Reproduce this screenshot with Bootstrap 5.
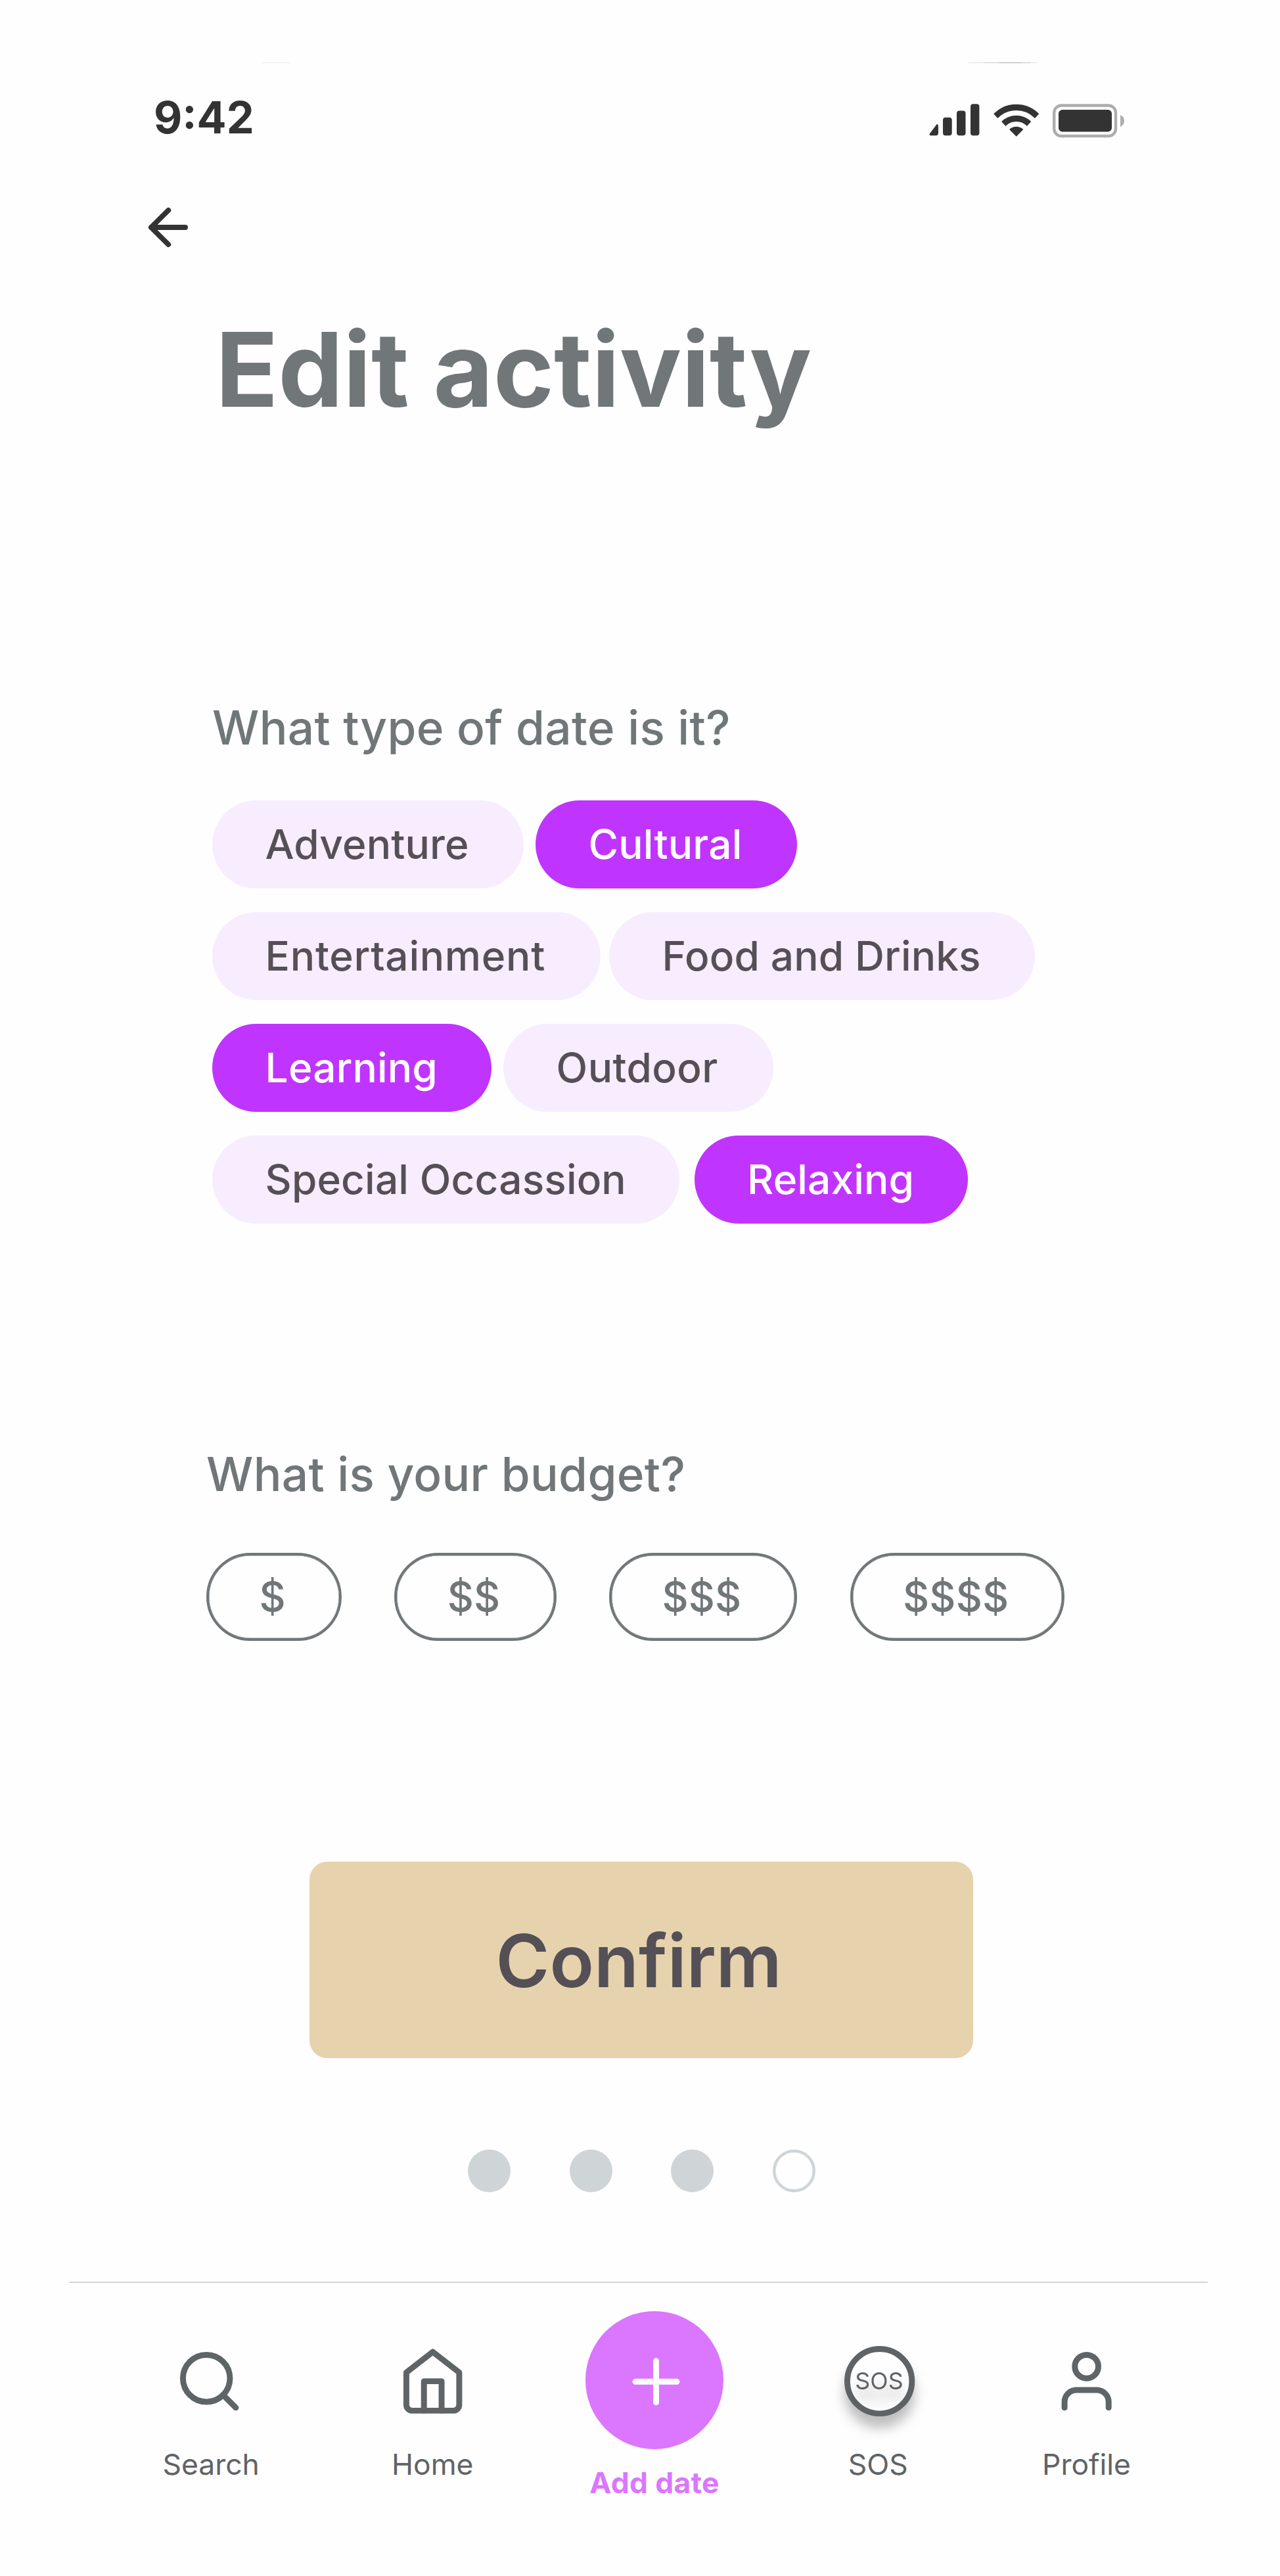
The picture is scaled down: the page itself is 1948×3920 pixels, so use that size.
<!DOCTYPE html>
<html lang="en">
<head>
<meta charset="utf-8">
<meta name="viewport" content="width=device-width, initial-scale=1">
<title>Edit activity</title>
<link href="https://cdn.jsdelivr.net/npm/bootstrap@5.3.0/dist/css/bootstrap.min.css" rel="stylesheet">
<style>
  body { font-family: Inter, "Liberation Sans", sans-serif; background: #fefefe; color: #717678; }
  .phone { width: 1948px; height: 3920px; overflow: hidden; }
  .phone svg { display: block; overflow: visible; flex: none; }
  .edge-lines { height: 1px; padding-left: 399px; margin-top: 95px; }
  .edge-a { width: 42px; background: #e8e8e8; }
  .edge-b { width: 104px; margin-left: 1033px; background: linear-gradient(90deg, #e2e2e2 0 23px, #c9c9c9 23px 47px, #ababab 47px 80px, #c6c6c6 80px 95px, #e2e2e2 95px); }
  .status { height: 114px; padding: 38px 237px 0 234px; color: #333; }
  .clock { font-size: 66.7px; line-height: 90px; font-weight: 700; }
  .status-icons { margin-top: 24px; }
  .back { margin: 102px 0 0 222px; width: 68px; height: 68px; }
  h1 { font-size: 157px; line-height: 190px; font-weight: 700; margin: 87px 0 0 328px; }
  h2 { font-size: 71.1px; line-height: 86px; font-weight: 500; margin: 0; white-space: nowrap; letter-spacing: .33px; }
  .q-type { padding: 407.4px 0 0 323px; }
  .q-budget { padding: 338px 0 0 314px; }
  .tags { margin-top: 67.9px; gap: 36.2px; }
  .chip { height: 133.8px; padding: 0 0 0 80.6px; border: 0; font-size: 62.2px; line-height: 1; font-weight: 500; letter-spacing: .12px; color: #545056; background: #f8edff; white-space: nowrap; }
  .chip.active, .chip.active:hover { background: #c034ff; color: #fff; }
  .gap-18 { gap: 18px; } .gap-13 { gap: 13.4px; } .gap-22 { gap: 22.5px; }
  .w474 { width: 474px; } .w398 { width: 398px; } .w590 { width: 590.6px; letter-spacing: .7px; } .w648 { width: 648px; }
  .w425 { width: 425px; } .w411 { width: 411px; letter-spacing: .4px; } .w711 { width: 711px; } .w416 { width: 416px; }
  .prices { margin-top: 77px; gap: 80.3px; }
  .price { height: 134px; border: 4px solid #717678; box-shadow: inset 0 0 0 .5px #717678; padding: 0 0 0 76.4px; font-size: 62.2px; line-height: 1; font-weight: 500; letter-spacing: .2px; color: #717678; }
  .w206 { width: 206px; } .w246 { width: 246.4px; } .w286 { width: 286.3px; } .w326 { width: 326.3px; }
  .confirm { display: block; width: 1010px; height: 299.6px; margin: 335.5px 0 0 471px; padding: 3px 0 0 283.6px; border: 0; border-radius: 27px; background: #e6d2ad; color: #545056; font-size: 111px; font-weight: 600; line-height: 1; }
  .steps { margin: 138.8px 0 0 712px; gap: 89.6px; }
  .step { width: 65px; height: 65px; background: #cfd4d7; }
  .step.todo { background: transparent; border: 4px solid #cfd4d7; box-shadow: inset 0 0 0 .5px #cfd4d7; }
  .tabs { width: 1733.4px; margin: 136px 0 0 105px; border-top: 2.3px solid #cfd4d7; }
  .tab { color: #5f6466; font-size: 44.4px; line-height: 54px; text-decoration: none; padding-top: 96.4px; white-space: nowrap; }
  .tab-label { margin-top: 45.8px; }
  .t1 { margin-left: 142.6px; width: 147px; } .t1 svg { margin-left: -4px; }
  .t2 { margin-left: 190.2px; width: 147px; }
  .t3 { margin-left: 159.2px; width: 210px; padding-top: 42.6px; color: #db76ff; font-weight: 700; letter-spacing: .35px; }
  .t3 .tab-label { margin-top: 24px; }
  .t4 { margin-left: 157.3px; width: 160px; } .t4 .tab-label { margin-left: -4px; }
  .t5 { margin-left: 156.2px; width: 158px; }
</style>
</head>
<body>
<main class="phone d-flex flex-column align-items-start">
  <div class="edge-lines d-flex"><div class="edge-a"></div><div class="edge-b"></div></div>

  <header class="status w-100 d-flex justify-content-between align-items-start">
    <div class="clock">9:42</div>
    <svg class="status-icons" width="297" height="52" viewBox="1414 158 297 52">
      <g fill="#333">
        <path d="M1424.6 190.4Q1426.2 188 1427.4 189.8Q1428 190.8 1428 193V202.2Q1428 206.3 1424 206.3H1417.5Q1413.2 206.3 1414.8 203.6Z"/>
        <rect x="1435" y="178.7" width="13.7" height="27.6" rx="4"/>
        <rect x="1456" y="168.5" width="13.5" height="37.8" rx="4"/>
        <rect x="1477" y="158.2" width="13.4" height="48.1" rx="4"/>
        <g stroke="#333" stroke-width="1.4" stroke-linejoin="round">
          <path d="M1513.1 173.2A48 48 0 0 1 1580.3 173.2L1574.9 178.9A40 40 0 0 0 1518.5 178.9Z"/>
          <path d="M1525.1 185A31.5 31.5 0 0 1 1568.3 185L1562.9 190.9A23 23 0 0 0 1530.5 190.9Z"/>
          <path d="M1537 197A15 15 0 0 1 1556.4 197L1546.7 206.7Z"/>
        </g>
        <rect x="1611" y="167" width="81" height="33.4" rx="6"/>
      </g>
      <rect x="1604.2" y="160.5" width="93.8" height="46.5" rx="11" fill="none" stroke="#adadad" stroke-width="4.4"/>
      <path d="M1705 175Q1711 178 1711 184T1705 193Z" fill="#adadad"/>
    </svg>
  </header>

  <svg class="back" viewBox="222 312 68 68" fill="none" stroke="#333" stroke-width="8" stroke-linecap="round" stroke-linejoin="round">
    <path d="M282 346H230M256.2 320L230 346L256.2 372"/>
  </svg>

  <h1>Edit activity</h1>

  <section class="q-type">
    <h2>What type of date is it?</h2>
    <div class="tags d-flex flex-column">
      <div class="d-flex gap-18"><button class="chip btn rounded-pill text-start w474">Adventure</button><button class="chip btn rounded-pill text-start active w398">Cultural</button></div>
      <div class="d-flex gap-13"><button class="chip btn rounded-pill text-start w590">Entertainment</button><button class="chip btn rounded-pill text-start w648">Food and Drinks</button></div>
      <div class="d-flex gap-18"><button class="chip btn rounded-pill text-start active w425">Learning</button><button class="chip btn rounded-pill text-start w411">Outdoor</button></div>
      <div class="d-flex gap-22"><button class="chip btn rounded-pill text-start w711">Special Occassion</button><button class="chip btn rounded-pill text-start active w416">Relaxing</button></div>
    </div>
  </section>

  <section class="q-budget">
    <h2>What is your budget?</h2>
    <div class="prices d-flex">
      <button class="price btn rounded-pill text-start w206">$</button>
      <button class="price btn rounded-pill text-start w246">$$</button>
      <button class="price btn rounded-pill text-start w286">$$$</button>
      <button class="price btn rounded-pill text-start w326">$$$$</button>
    </div>
  </section>

  <button class="confirm btn text-start">Confirm</button>

  <div class="steps d-flex">
    <span class="step rounded-circle"></span><span class="step rounded-circle"></span><span class="step rounded-circle"></span><span class="step todo rounded-circle"></span>
  </div>

  <nav class="tabs d-flex align-items-start">
    <a class="tab t1 d-flex flex-column align-items-center" href="#">
      <svg width="107.3" height="107.3" viewBox="0 0 24 24" fill="none" stroke="currentColor" stroke-width="2" stroke-linecap="round" stroke-linejoin="round"><circle cx="11" cy="11" r="8"/><path d="M21 21l-4.35-4.35"/></svg>
      <span class="tab-label">Search</span>
    </a>
    <a class="tab t2 d-flex flex-column align-items-center" href="#">
      <svg width="107.3" height="107.3" viewBox="0 0 24 24" fill="none" stroke="currentColor" stroke-width="2" stroke-linecap="round" stroke-linejoin="round"><path d="M3 9l9-7 9 7v11a2 2 0 0 1-2 2H5a2 2 0 0 1-2-2z"/><path d="M9 22V12h6v10"/></svg>
      <span class="tab-label">Home</span>
    </a>
    <a class="tab t3 d-flex flex-column align-items-center" href="#">
      <svg width="210" height="210" viewBox="891 3516.7 210 210"><circle cx="996" cy="3621.7" r="105" fill="#db76ff"/><path d="M967 3624h63M998.5 3592.5v63" stroke="#fff" stroke-width="8.9" stroke-linecap="round"/></svg>
      <span class="tab-label">Add date</span>
    </a>
    <a class="tab t4 d-flex flex-column align-items-center" href="#">
      <svg width="107.3" height="107.3" viewBox="0 0 107.3 107.3">
        <defs><filter id="drop" x="-50%" y="-50%" width="200%" height="220%"><feDropShadow dx="0" dy="17.8" stdDeviation="8.9" flood-color="#000" flood-opacity=".25"/></filter></defs>
        <circle cx="53.65" cy="53.65" r="49.2" fill="#fefefe" stroke="#5f6466" stroke-width="8.9" filter="url(#drop)"/>
        <text x="53" y="66.4" text-anchor="middle" font-size="35.8" font-weight="400" fill="#5f6466" filter="url(#drop)">SOS</text>
      </svg>
      <span class="tab-label">SOS</span>
    </a>
    <a class="tab t5 d-flex flex-column align-items-center" href="#">
      <svg width="107.3" height="107.3" viewBox="0 0 24 24" fill="none" stroke="currentColor" stroke-width="2" stroke-linecap="round" stroke-linejoin="round"><circle cx="12" cy="7" r="4"/><path d="M4.5 21v-2a4 4 0 0 1 4-4h7a4 4 0 0 1 4 4v2"/></svg>
      <span class="tab-label">Profile</span>
    </a>
  </nav>
</main>
<script src="https://cdn.jsdelivr.net/npm/bootstrap@5.3.0/dist/js/bootstrap.bundle.min.js"></script>
</body>
</html>
